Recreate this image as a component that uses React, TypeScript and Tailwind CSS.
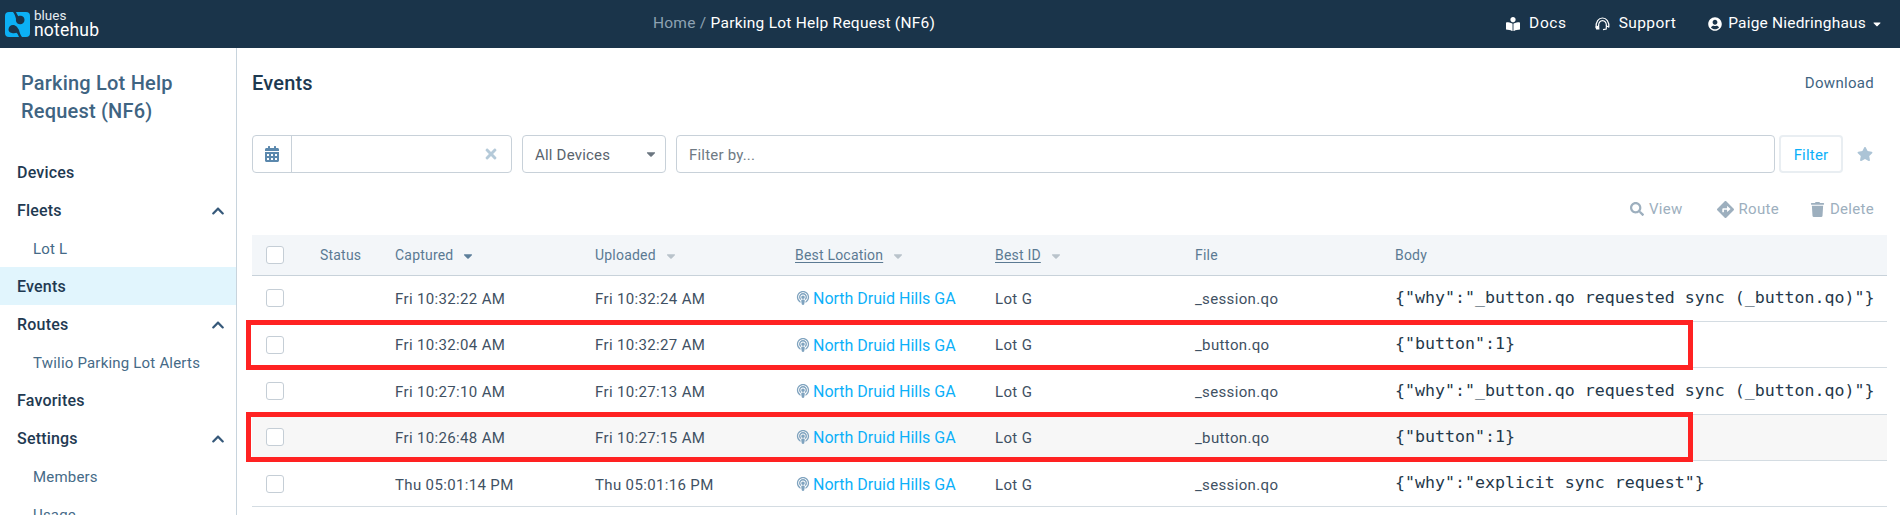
import React from "react";
import { FaCalendarAlt, FaTimes, FaStar, FaSearch, FaDirections, FaTrash, FaUserCircle, FaBookReader, FaPodcast, FaChevronUp, FaCaretDown } from "react-icons/fa";

const font = "font-['Roboto','Liberation_Sans',sans-serif]";

function Logo() {
  return (
    <svg width="25" height="25" viewBox="0 0 25 25" className="shrink-0">
      <rect x="0" y="0" width="25" height="25" rx="4" fill="#0cb0f5" />
      <path d="M8 0 H11 C12 2 12.5 3.5 13.5 4.2 C15.5 3.2 19.5 4 19.5 8 C19.5 10.5 17.5 12.3 15 12.2 C12 12 10.5 9.5 11 7 C10.5 4.5 9.5 2 8 0 Z" fill="#1a344a" />
      <path d="M17 25 H14 C13 23 12.5 21.5 11.5 20.8 C9.5 21.8 3.5 21.5 3.5 17.5 C3.5 15 5.5 13 8 13 C11 13 12.5 15.5 14 18 C14.5 20.5 15.5 23 17 25 Z" fill="#1a344a" />
    </svg>
  );
}

function SupportIcon() {
  return (
    <svg width="15" height="14" viewBox="0 0 15 14" fill="none" stroke="white" strokeWidth="1.2" className="shrink-0 mr-[9px]">
      <path d="M1.2 10.5 C0.6 5 3.5 1 7.5 1 C11.5 1 14.4 5 13.8 10.5" />
      <path d="M3.6 9 C3.4 6 5 3.6 7.5 3.6 C10 3.6 11.6 6 11.4 9" />
      <path d="M1 10 L3.6 9 L3.8 12 L1.6 12 Z" fill="white" />
      <path d="M14 10 L11.4 9 L11.2 12 L8 12.6" />
    </svg>
  );
}

function SideItem({ label, sub, active, chevron }: { label: string; sub?: boolean; active?: boolean; chevron?: boolean }) {
  return (
    <div className={`h-[38px] shrink-0 flex items-center justify-between pr-[11px] pt-[2px] ${sub ? "pl-[33px] text-[15px] text-[#456a87] tracking-[0.2px]" : "pl-[17px] text-[16px] font-medium text-[#1f3a52] tracking-[0.2px]"} ${active ? "bg-[#e1f5fd]" : ""}`}>
      <span>{label}</span>
      {chevron && <FaChevronUp className="text-[14px] text-[#36597a]" />}
    </div>
  );
}

const cols = ["w-[68px] pl-[14px] shrink-0", "w-[75px] shrink-0", "w-[200px] shrink-0", "w-[200px] shrink-0", "w-[200px] shrink-0", "w-[200px] shrink-0", "w-[200px] shrink-0", "flex-1 min-w-0"];

function Check() {
  return <span className="block w-[18px] h-[18px] rounded-[3px] border border-[#c5ced6] bg-white" />;
}

function Caret({ dark }: { dark?: boolean }) {
  return <FaCaretDown className={`text-[14px] ml-[8px] ${dark ? "text-[#5d7f9b]" : "text-[#b9c3cb]"}`} />;
}

function HeaderRow() {
  const c = "flex items-center pt-[2px] text-[14px] tracking-[0.2px] text-[#5b7a93]";
  return (
    <div className="flex h-[40.5px] bg-[#f3f6f9] border-b border-[#c8d2da] items-center">
      <div className={cols[0]}><Check /></div>
      <div className={`${cols[1]} ${c}`}>Status</div>
      <div className={`${cols[2]} ${c}`}>Captured<Caret dark /></div>
      <div className={`${cols[3]} ${c}`}>Uploaded<Caret /></div>
      <div className={`${cols[4]} ${c}`}><span className="underline underline-offset-2">Best Location</span><Caret /></div>
      <div className={`${cols[5]} ${c}`}><span className="underline underline-offset-2">Best ID</span><Caret /></div>
      <div className={`${cols[6]} ${c}`}>File</div>
      <div className={`${cols[7]} ${c}`}>Body</div>
    </div>
  );
}

function Row({ cap, up, file, body, bg, box }: { cap: string; up: string; file: string; body: string; bg?: string; box?: string }) {
  const t = "pt-[2px] text-[15px] text-[#3f5163] tracking-[0.35px]";
  return (
    <div className={`relative flex items-center border-b border-[#d4dce2] h-[46.4px] ${bg ?? ""}`}>
      <div className={cols[0]}><Check /></div>
      <div className={cols[1]} />
      <div className={`${cols[2]} ${t}`}>{cap}</div>
      <div className={`${cols[3]} ${t}`}>{up}</div>
      <div className={`${cols[4]} flex items-center pt-[2px]`}>
        <FaPodcast className="text-[14px] text-[#7fa3bf] ml-[1px] mr-[3px] -mt-[2px]" />
        <span className="text-[16px] text-[#0cb0f9]">North Druid Hills GA</span>
      </div>
      <div className={`${cols[5]} ${t}`}>Lot G</div>
      <div className={`${cols[6]} ${t}`}>{file}</div>
      <div className={`${cols[7]} font-['DejaVu_Sans_Mono',monospace] text-[16.6px] text-[#24384a] whitespace-nowrap`}>{body}</div>
      {box && <div className={`absolute left-[-6px] ${box} w-[1447px] h-[50px] border-[5px] border-[#ff2222] pointer-events-none`} />}
    </div>
  );
}

export default function App() {
  const why = '{"why":"_button.qo requested sync (_button.qo)"}';
  return (
    <div className={`h-screen overflow-hidden flex flex-col bg-white ${font}`}>
      <header className="h-[48px] shrink-0 bg-[#1a344a] flex items-center text-white">
        <div className="pl-[5px] flex items-center w-[440px] gap-[4px]">
          <Logo />
          <div className="flex flex-col pb-[2px]">
            <span className="text-[13.5px] text-[#e6edf2] leading-[14px]">blues</span>
            <span className="text-[17.5px] tracking-[0.2px] leading-[16px]">notehub</span>
          </div>
        </div>
        <div className="flex-1 text-center text-[15.5px] pr-[358px] tracking-[0.25px]">
          <span className="text-[#8ea2b3]">Home / </span>Parking Lot Help Request (NF6)
        </div>
        <div className="flex items-center text-[15.5px] tracking-[0.2px] pr-[17px]">
          <FaBookReader className="text-[14px] mr-[9px]" />
          <span className="mr-[28px] tracking-[0.6px]">Docs</span>
          <SupportIcon />
          <span className="mr-[32px] tracking-[0.4px]">Support</span>
          <FaUserCircle className="text-[14px] mr-[6px]" />
          <span>Paige Niedringhaus</span>
          <FaCaretDown className="text-[12px] ml-[5px]" />
        </div>
      </header>
      <div className="flex flex-1 min-h-0">
        <aside className="w-[237px] shrink-0 border-r border-[#c8d4dd] flex flex-col overflow-hidden">
          <div className="pl-[21px] pt-[21px] pr-[20px] text-[20px] leading-[28px] font-medium text-[#3f6482] tracking-[0.2px] h-[105px] shrink-0">
            Parking Lot Help Request (NF6)
          </div>
          <SideItem label="Devices" />
          <SideItem label="Fleets" chevron />
          <SideItem label="Lot L" sub />
          <SideItem label="Events" active />
          <SideItem label="Routes" chevron />
          <SideItem label="Twilio Parking Lot Alerts" sub />
          <SideItem label="Favorites" />
          <SideItem label="Settings" chevron />
          <SideItem label="Members" sub />
          <SideItem label="Usage" sub />
        </aside>
        <main className="flex-1 min-w-0 pl-[15px] pr-[13px] overflow-hidden">
          <div className="flex justify-between items-center h-[70px] pr-[13px]">
            <h1 className="text-[20px] font-medium text-[#1d3950] tracking-[0.2px]">Events</h1>
            <span className="text-[15px] text-[#3f6482] tracking-[0.3px]">Download</span>
          </div>
          <div className="flex items-center mt-[17px] h-[38px]">
            <div className="flex w-[260px] h-full border border-[#c8d1d9] rounded-[4px] items-center">
              <div className="w-[39px] h-full border-r border-[#c8d1d9] flex items-center justify-center">
                <FaCalendarAlt className="text-[16px] text-[#5b88ad]" />
              </div>
              <div className="flex-1" />
              <FaTimes className="text-[16px] text-[#b5cad9] mr-[12px]" />
            </div>
            <div className="ml-[10px] w-[144px] h-full border border-[#c8d1d9] rounded-[4px] flex items-center justify-between pl-[12px] pr-[7px] pt-[2px] text-[15px] text-[#59636d] tracking-[0.2px]">
              All Devices
              <FaCaretDown className="text-[14px] text-[#6b7680] -mt-[2px]" />
            </div>
            <div className="ml-[10px] flex-1 h-full border border-[#c8d1d9] rounded-[4px] flex items-center pl-[12px] pt-[2px] text-[15px] text-[#6f7a84] tracking-[0.2px]">
              Filter by...
            </div>
            <div className="ml-[4px] w-[64px] h-full border-2 border-[#e9eef2] rounded-[4px] flex items-center justify-center pt-[2px] text-[15px] text-[#0cb0f9] tracking-[0.2px]">
              Filter
            </div>
            <FaStar className="text-[16px] text-[#acc4d6] mx-[14px] shrink-0" />
          </div>
          <div className="flex justify-end items-center h-[24px] mt-[23px] pt-[2px] pr-[13px] text-[15px] text-[#9dafbe] tracking-[0.3px]">
            <FaSearch className="text-[14px] mr-[5px]" /><span>View</span>
            <FaDirections className="text-[17px] ml-[34px] mr-[5px]" /><span>Route</span>
            <FaTrash className="text-[15px] ml-[31px] mr-[5px]" /><span>Delete</span>
          </div>
          <div className="mt-[15px]">
            <HeaderRow />
            <Row cap="Fri 10:32:22 AM" up="Fri 10:32:24 AM" file="_session.qo" body={why} />
            <Row cap="Fri 10:32:04 AM" up="Fri 10:32:27 AM" file="_button.qo" body='{"button":1}' box="top-[-2px]" />
            <Row cap="Fri 10:27:10 AM" up="Fri 10:27:13 AM" file="_session.qo" body={why} />
            <Row bg="bg-[#f7f7f7]" cap="Fri 10:26:48 AM" up="Fri 10:27:15 AM" file="_button.qo" body='{"button":1}' box="top-[-3px]" />
            <Row cap="Thu 05:01:14 PM" up="Thu 05:01:16 PM" file="_session.qo" body='{"why":"explicit sync request"}' />
          </div>
        </main>
      </div>
    </div>
  );
}
